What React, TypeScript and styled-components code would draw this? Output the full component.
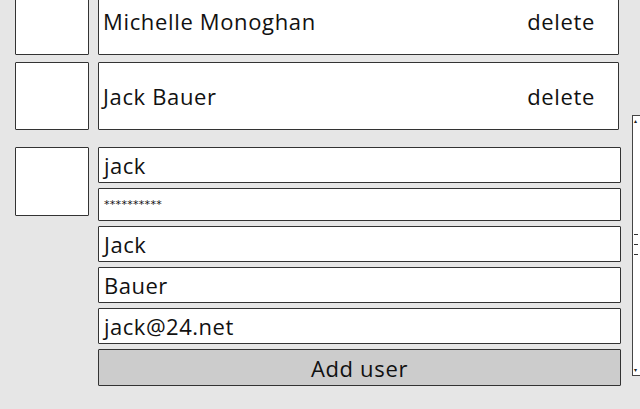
import React from "react";
import styled, { createGlobalStyle } from "styled-components";

const Global = createGlobalStyle`
  html, body {
    margin: 0;
    padding: 0;
    background: #e6e6e6;
    overflow: hidden;
  }
  body {
    font-family: "Open Sans", "DejaVu Sans", sans-serif;
    color: #111;
  }
`;

const Page = styled.div`
  display: flex;
  width: 640px;
  height: 409px;
  overflow: hidden;
`;

const Main = styled.div`
  display: flex;
  flex-direction: column;
  gap: 7px;
  padding-left: 15px;
  margin-top: -13px;
  flex: none;
`;

const Row = styled.div<{ $top?: number }>`
  display: flex;
  gap: 9px;
  align-items: flex-start;
  margin-top: ${(p) => p.$top ?? 0}px;
`;

const Thumb = styled.div<{ $h?: number }>`
  box-sizing: border-box;
  width: 74px;
  height: ${(p) => p.$h ?? 68}px;
  background: #fff;
  border: 1px solid #333;
  border-radius: 1px;
  flex: none;
`;

const NameBox = styled.div`
  box-sizing: border-box;
  width: 521px;
  height: 68px;
  background: #fff;
  border: 1px solid #333;
  border-radius: 1px;
  display: flex;
  align-items: center;
  justify-content: space-between;
  padding: 0 23px 0 4px;
  font-size: 22px;
  letter-spacing: 0.65px;
`;

const Name = styled.span``;

const Delete = styled.span``;

const Form = styled.div`
  display: flex;
  flex-direction: column;
  gap: 5px;
  width: 523px;
`;

const Field = styled.div<{ $h?: number; $small?: boolean }>`
  box-sizing: border-box;
  height: ${(p) => p.$h ?? 36}px;
  background: #fff;
  border: 1px solid #333;
  border-radius: 1px;
  display: flex;
  align-items: center;
  padding-left: 5px;
  font-size: ${(p) => (p.$small ? "11px" : "22px")};
  letter-spacing: ${(p) => (p.$small ? "0.3px" : "0.5px")};
  font-family: ${(p) => (p.$small ? '"DejaVu Sans", sans-serif' : "inherit")};
`;

const Button = styled.div`
  box-sizing: border-box;
  height: 37px;
  background: #cccccc;
  border: 1px solid #333;
  border-radius: 1px;
  display: flex;
  align-items: center;
  justify-content: center;
  font-size: 22px;
  letter-spacing: 0.65px;
`;

const Scrollbar = styled.div`
  box-sizing: border-box;
  flex: none;
  margin-left: 11px;
  margin-top: 115px;
  width: 14px;
  height: 261px;
  background: #fff;
  border: 1px solid #444;
  position: relative;
`;

const Arrow = styled.span<{ $bottom?: boolean }>`
  position: absolute;
  left: 1px;
  ${(p) => (p.$bottom ? "bottom: 2px;" : "top: 2px;")}
  font-size: 6px;
  line-height: 6px;
  color: #222;
  font-family: "DejaVu Sans", sans-serif;
`;

const Grip = styled.div`
  position: absolute;
  left: 1px;
  top: 118px;
  display: flex;
  flex-direction: column;
  gap: 9px;
`;

const GripLine = styled.div`
  width: 4px;
  height: 1px;
  background: #333;
`;

export default function App() {
  return (
    <>
      <Global />
      <Page>
        <Main>
          <Row>
            <Thumb />
            <NameBox>
              <Name>Michelle Monoghan</Name>
              <Delete>delete</Delete>
            </NameBox>
          </Row>
          <Row>
            <Thumb />
            <NameBox>
              <Name>Jack Bauer</Name>
              <Delete>delete</Delete>
            </NameBox>
          </Row>
          <Row $top={10}>
            <Thumb $h={69} />
            <Form>
              <Field>jack</Field>
              <Field $h={33} $small>
                **********
              </Field>
              <Field>Jack</Field>
              <Field>Bauer</Field>
              <Field>jack@24.net</Field>
              <Button>Add user</Button>
            </Form>
          </Row>
        </Main>
        <Scrollbar>
          <Arrow>▴</Arrow>
          <Grip>
            <GripLine />
            <GripLine />
            <GripLine />
          </Grip>
          <Arrow $bottom>▾</Arrow>
        </Scrollbar>
      </Page>
    </>
  );
}
